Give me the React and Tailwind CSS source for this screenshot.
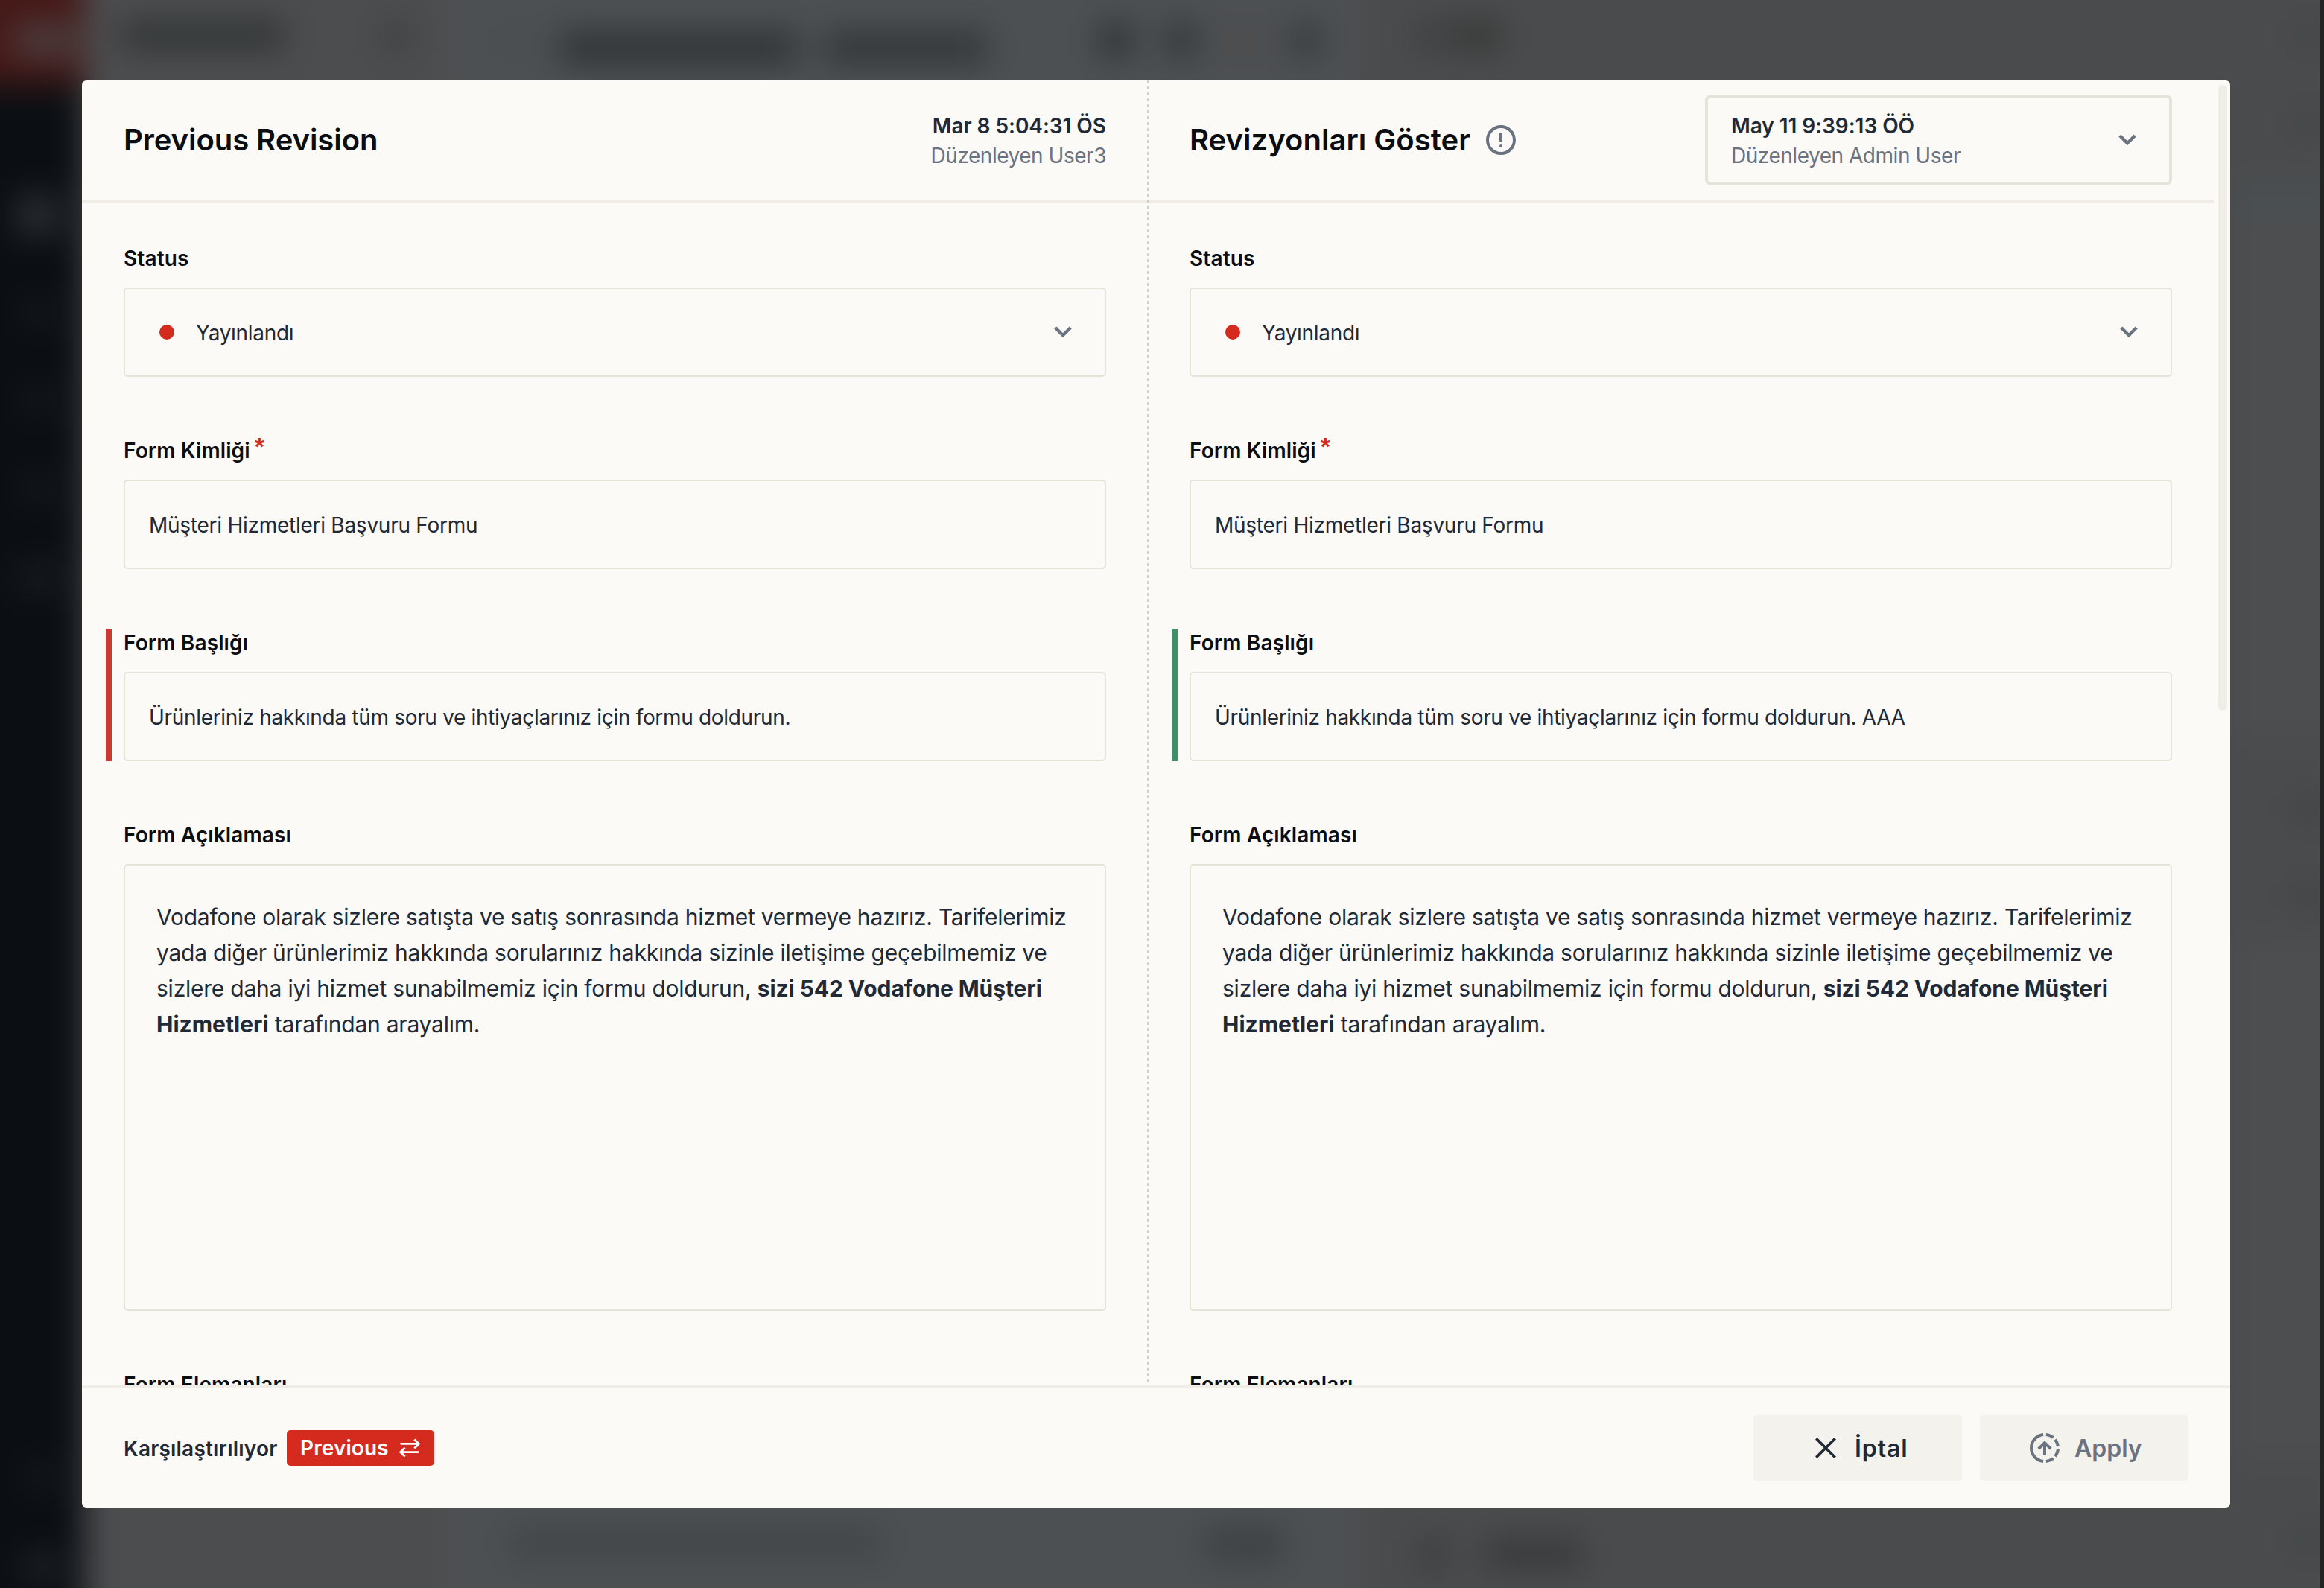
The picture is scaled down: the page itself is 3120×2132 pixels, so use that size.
import React from "react";

const Chevron = () => (
  <svg className="h-6 w-6 shrink-0 text-[#6b7280]" viewBox="0 0 24 24" fill="none" stroke="currentColor" strokeWidth="4.4">
    <path d="M1.8 6 12 16.2 22.2 6" />
  </svg>
);

const InfoIcon = () => (
  <svg className="h-10 w-10 shrink-0 text-[#6b7280]" viewBox="0 0 40 40" fill="none" stroke="currentColor" strokeWidth="4">
    <circle cx="20" cy="20" r="18" />
    <path d="M20 10v12" />
    <circle cx="20" cy="28" r="2" fill="currentColor" stroke="none" />
  </svg>
);

const SwapIcon = () => (
  <svg className="h-7 w-7 shrink-0" viewBox="0 0 28 28" fill="none" stroke="currentColor" strokeWidth="2.8">
    <path d="M1.5 8.4H26M20.3 2.4l6 6-6 6M26 19.6H1.8M7.7 13.8l-6 5.8 6 5.8" />
  </svg>
);

const CloseIcon = () => (
  <svg className="h-7 w-7 shrink-0" viewBox="0 0 28 28" fill="none" stroke="currentColor" strokeWidth="3.6">
    <path d="M1.3 1.3 26.7 26.7M26.7 1.3 1.3 26.7" />
  </svg>
);

const point = (deg) => {
  const a = (deg * Math.PI) / 180;
  return `${(20 + 18 * Math.sin(a)).toFixed(2)} ${(20 - 18 * Math.cos(a)).toFixed(2)}`;
};
const arcs = [[6, 39], [51, 84], [96, 129], [141, 174], [186, 354]];

const PublishIcon = () => (
  <svg className="h-10 w-10 shrink-0" viewBox="0 0 40 40" fill="none" stroke="currentColor" strokeWidth="4">
    {arcs.map(([a, b]) => (
      <path key={a} d={`M${point(a)}A18 18 0 0 1 ${point(b)}`} />
    ))}
    <path d="M20 30V13M11.8 21.2 20 13l8.2 8.2" />
  </svg>
);

const Field = ({ label, required, mark, children, tall }) => (
  <div className="relative">
    {mark && <div className={`absolute -left-6 top-0 h-full w-2 ${mark}`} />}
    <div className="flex h-[58px] items-start pt-px text-[28px] font-semibold leading-9 tracking-[0.12px] text-[#0a0d12]">
      {label}
      {required && (
        <span className="ml-[6px] font-['Liberation_Sans',sans-serif] text-[34px] font-bold leading-6 text-[#d52b1e]">*</span>
      )}
    </div>
    {children && (
      <div
        className={`rounded-[5px] border-2 border-[#e5e4d9] ${
          tall ? "h-[600px] pl-[42px] pr-8 pt-[45px]" : "flex h-[120px] items-center pl-8 pr-11"
        } text-[28px] tracking-[-0.32px] text-[#212936]`}
      >
        {children}
      </div>
    )}
  </div>
);

const Fields = ({ title, mark }) => (
  <>
    <Field label="Status">
      <span className="ml-[14px] mr-[29px] h-5 w-5 rounded-full bg-[#d52b1e]" />
      <span className="flex-1 pt-px">Yayınlandı</span>
      <Chevron />
    </Field>
    <Field label="Form Kimliği" required>
      <span className="pt-px tracking-[-0.26px]">Müşteri Hizmetleri Başvuru Formu</span>
    </Field>
    <Field label="Form Başlığı" mark={mark}>
      <span className="pt-px">{title}</span>
    </Field>
    <Field label="Form Açıklaması" tall>
      <p className="whitespace-nowrap text-[30px] leading-[48px] tracking-[-0.23px]">
        Vodafone olarak sizlere satışta ve satış sonrasında hizmet vermeye hazırız. Tarifelerimiz
        <br />
        yada diğer ürünlerimiz hakkında sorularınız hakkında sizinle iletişime geçebilmemiz ve
        <br />
        sizlere daha iyi hizmet sunabilmemiz için formu doldurun,{" "}
        <strong className="font-bold tracking-[-0.08px]">sizi 542 Vodafone Müşteri</strong>
        <br />
        <strong className="font-bold tracking-normal">Hizmetleri</strong> tarafından arayalım.
      </p>
    </Field>
    <Field label="Form Elemanları" />
  </>
);

const Revision = ({ date, author, align }) => (
  <div className={`pt-px text-[28px] leading-10 ${align || ""}`}>
    <div className="font-semibold tracking-[-0.05px] text-[#212936]">{date}</div>
    <div className="tracking-[-0.47px] text-[#6b7280]">{author}</div>
  </div>
);

const Backdrop = () => (
  <div className="absolute inset-0 overflow-hidden bg-[#4c4d4f]">
    <div className="absolute -inset-20 flex blur-[22px]">
      <aside className="flex w-[193px] flex-col items-end bg-[#0b0f13] pb-[90px]">
        <div className="flex h-[194px] w-full items-end bg-[#451816] pb-9 pl-[98px]">
          <div className="h-12 w-[85px] bg-[#4b3c3e]" />
        </div>
        <div className="mr-8 mt-[148px] flex flex-1 flex-col items-center gap-[90px]">
          <div className="h-[54px] w-[60px] bg-[#2a2e32]" />
          <div className="h-7 w-[45px] bg-[#171b1f]" />
          <div className="h-7 w-[45px] bg-[#171b1f]" />
          <div className="h-7 w-[45px] bg-[#171b1f]" />
          <div className="h-8 w-[55px] bg-[#1b1f23]" />
        </div>
        <div className="mr-8 flex flex-col items-center gap-[90px]">
          <div className="h-7 w-[45px] bg-[#171b1f]" />
          <div className="h-9 w-[50px] bg-[#202428]" />
        </div>
      </aside>
      <div className="flex w-[487px] items-start justify-between bg-[#4c4d4f] pl-12 pr-12 pt-[104px]">
        <div className="h-[46px] w-[222px] bg-[#343838]" />
        <div className="h-[46px] w-10 bg-[#3e4142]" />
      </div>
      <div className="flex w-[1225px] flex-col justify-between bg-[#4d5052] pb-[116px] pl-[85px] pr-[54px] pt-[102px]">
        <div className="flex items-center">
          <div className="h-10 w-5 bg-[#434a4d]" />
          <div className="ml-[46px] mt-5 h-11 w-[319px] bg-[#303337]" />
          <div className="ml-9 mt-5 h-11 w-[220px] bg-[#33373a]" />
          <div className="ml-auto flex gap-[46px]">
            <div className="h-11 w-[42px] bg-[#2c3133]" />
            <div className="h-11 w-[42px] bg-[#303537]" />
            <div className="h-11 w-9 bg-[#494b4d]" />
            <div className="h-11 w-9 bg-[#33383a]" />
          </div>
        </div>
        <div className="flex justify-between pr-12">
          <div className="h-10 w-[500px] bg-[#414548]" />
          <div className="h-11 w-[105px] bg-[#3b4043]" />
        </div>
      </div>
      <div className="flex flex-1 flex-col justify-between bg-[#4a4b4c] pb-[106px] pl-[80px] pt-[110px]">
        <div className="flex gap-3">
          <div className="h-9 w-9 bg-[#3a3d3d]" />
          <div className="h-9 w-[62px] bg-[#343736]" />
        </div>
        <div className="flex gap-[50px]">
          <div className="h-10 w-10 bg-[#3b3d3e]" />
          <div className="h-10 w-[130px] bg-[#36393a]" />
        </div>
      </div>
      <div className="flex w-[200px] flex-col bg-[#4a4b4c] pt-[106px]">
        <div className="mx-auto h-10 w-10 bg-[#424747]" />
        <div className="mx-auto mt-20 h-10 w-10 bg-[#424747]" />
        <div className="mt-[54px] h-[60px] bg-[#4a4f51]" />
        <div className="h-[690px] bg-[#4d4e50]" />
        <div className="mx-auto mt-[76px] h-10 w-10 bg-[#404545]" />
        <div className="mx-auto mt-[78px] h-10 w-10 bg-[#404545]" />
        <div className="mt-[36px] h-[700px] bg-[#4d4e50]" />
        <div className="mx-auto mt-[90px] h-10 w-10 bg-[#424747]" />
      </div>
    </div>
    <div className="absolute inset-y-0 right-0 w-1.5 bg-[#222323]" />
  </div>
);

export default function App() {
  return (
    <div className="relative flex h-[2132px] w-[3120px] overflow-hidden pl-[110px] pt-[108px] font-['Inter',sans-serif]">
      <Backdrop />
      <div className="relative flex h-[1916px] w-[2884px] flex-col overflow-hidden rounded-[6px] bg-[#fbfaf6]">
        <div className="flex h-[1752px] overflow-hidden">
          <section className="w-[1430px] shrink-0">
            <header className="flex h-[164px] items-center justify-between border-b-4 border-[#efede5] pl-14 pr-[55px]">
              <h2 className="text-[40px] font-semibold tracking-[-0.05px] text-[#0a0d12]">Previous Revision</h2>
              <Revision date="Mar 8 5:04:31 ÖS" author="Düzenleyen User3" align="text-right" />
            </header>
            <div className="flex flex-col gap-20 pl-14 pr-[55px] pt-14">
              <Fields
                title="Ürünleriniz hakkında tüm soru ve ihtiyaçlarınız için formu doldurun."
                mark="bg-[#ce3832]"
              />
            </div>
          </section>
          <div className="h-[1748px] w-0.5 shrink-0 bg-[repeating-linear-gradient(to_bottom,#d3d1c6_0px,#d3d1c6_4px,transparent_4px,transparent_8px)]" />
          <section className="w-[1430px] shrink-0">
            <header className="flex h-[164px] items-center border-b-4 border-[#efede5] pl-[55px] pr-14">
              <h2 className="mr-[21px] text-[40px] font-semibold tracking-[0.03px] text-[#0a0d12]">Revizyonları Göster</h2>
              <InfoIcon />
              <div className="ml-auto flex h-[120px] w-[627px] items-center justify-between rounded-[6px] border-4 border-[#e5e4d9] pl-[31px] pr-11">
                <Revision date="May 11 9:39:13 ÖÖ" author="Düzenleyen Admin User" />
                <Chevron />
              </div>
            </header>
            <div className="flex flex-col gap-20 pl-[55px] pr-14 pt-14">
              <Fields
                title="Ürünleriniz hakkında tüm soru ve ihtiyaçlarınız için formu doldurun. AAA"
                mark="bg-[#3f9068]"
              />
            </div>
          </section>
          <div className="ml-1.5 mt-1.5 h-[840px] w-3 shrink-0 rounded-full bg-[#efede5]" />
        </div>
        <footer className="flex flex-1 items-center border-t-4 border-[#efede5] px-14">
          <span className="w-[219px] pt-px text-[28px] font-semibold tracking-[0.2px] text-[#212936]">Karşılaştırılıyor</span>
          <span className="flex h-12 w-[198px] items-center justify-between rounded-[5px] bg-[#d52b1e] pl-[18px] pr-[19px] text-[28px] font-semibold tracking-[0.1px] text-white">
            Previous
            <SwapIcon />
          </span>
          <button className="ml-auto flex h-[88px] w-[280px] items-center rounded-[5px] bg-[#f3f2ed] pl-[83px] text-[32px] font-semibold tracking-[0.9px] text-[#212936]">
            <CloseIcon />
            <span className="ml-[25px] pt-px">İptal</span>
          </button>
          <button className="ml-6 flex h-[88px] w-[280px] items-center rounded-[5px] bg-[#f3f2ed] pl-[67px] text-[32px] font-semibold text-[#6b7280]">
            <PublishIcon />
            <span className="ml-5 pt-px">Apply</span>
          </button>
        </footer>
      </div>
    </div>
  );
}
